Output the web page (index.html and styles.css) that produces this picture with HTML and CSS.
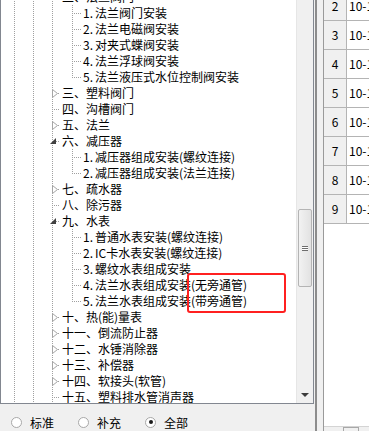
FILE: index.html
```html
<!DOCTYPE html>
<html>
<head>
    <title>定额章节</title>
    <link rel="stylesheet" href="styles.css">
</head>
<body>
    <div class="window">
        <div class="left-pane">
            <div class="tree-box">
                <div class="tree">
                    <div class="tree-rows">
                        <div class="row"><i class="g"></i><i class="g"></i><i class="c1"><svg class="open" width="6" height="6" viewBox="0 0 6 6"><path d="M6 0 L6 6 L0 6 Z" fill="#404040"/></svg></i><span>二、法兰阀门</span></div>
                        <div class="row"><i class="g"></i><i class="g"></i><i class="g"></i><i class="c2"></i><span><b class="n">1.</b>法兰阀门安装</span></div>
                        <div class="row"><i class="g"></i><i class="g"></i><i class="g"></i><i class="c2"></i><span><b class="n">2.</b>法兰电磁阀安装</span></div>
                        <div class="row"><i class="g"></i><i class="g"></i><i class="g"></i><i class="c2"></i><span><b class="n">3.</b>对夹式蝶阀安装</span></div>
                        <div class="row"><i class="g"></i><i class="g"></i><i class="g"></i><i class="c2"></i><span><b class="n">4.</b>法兰浮球阀安装</span></div>
                        <div class="row"><i class="g"></i><i class="g"></i><i class="g"></i><i class="c2 last"></i><span><b class="n">5.</b>法兰液压式水位控制阀安装</span></div>
                        <div class="row"><i class="g"></i><i class="g"></i><i class="c1"><svg class="closed" width="6" height="9" viewBox="0 0 6 9"><path d="M0.5 0.5 L5.5 4.5 L0.5 8.5 Z" fill="#fff" stroke="#a6a6a6"/></svg></i><span>三、塑料阀门</span></div>
                        <div class="row"><i class="g"></i><i class="g"></i><i class="c1"></i><span>四、沟槽阀门</span></div>
                        <div class="row"><i class="g"></i><i class="g"></i><i class="c1"><svg class="closed" width="6" height="9" viewBox="0 0 6 9"><path d="M0.5 0.5 L5.5 4.5 L0.5 8.5 Z" fill="#fff" stroke="#a6a6a6"/></svg></i><span>五、法兰</span></div>
                        <div class="row"><i class="g"></i><i class="g"></i><i class="c1"><svg class="open" width="6" height="6" viewBox="0 0 6 6"><path d="M6 0 L6 6 L0 6 Z" fill="#404040"/></svg></i><span>六、减压器</span></div>
                        <div class="row"><i class="g"></i><i class="g"></i><i class="g"></i><i class="c2"></i><span><b class="n">1.</b>减压器组成安装(螺纹连接)</span></div>
                        <div class="row"><i class="g"></i><i class="g"></i><i class="g"></i><i class="c2 last"></i><span><b class="n">2.</b>减压器组成安装(法兰连接)</span></div>
                        <div class="row"><i class="g"></i><i class="g"></i><i class="c1"><svg class="closed" width="6" height="9" viewBox="0 0 6 9"><path d="M0.5 0.5 L5.5 4.5 L0.5 8.5 Z" fill="#fff" stroke="#a6a6a6"/></svg></i><span>七、疏水器</span></div>
                        <div class="row"><i class="g"></i><i class="g"></i><i class="c1"></i><span>八、除污器</span></div>
                        <div class="row"><i class="g"></i><i class="g"></i><i class="c1"><svg class="open" width="6" height="6" viewBox="0 0 6 6"><path d="M6 0 L6 6 L0 6 Z" fill="#404040"/></svg></i><span>九、水表</span></div>
                        <div class="row"><i class="g"></i><i class="g"></i><i class="g"></i><i class="c2"></i><span><b class="n">1.</b>普通水表安装(螺纹连接)</span></div>
                        <div class="row"><i class="g"></i><i class="g"></i><i class="g"></i><i class="c2"></i><span><b class="n">2.</b>IC卡水表安装(螺纹连接)</span></div>
                        <div class="row"><i class="g"></i><i class="g"></i><i class="g"></i><i class="c2"></i><span><b class="n">3.</b>螺纹水表组成安装</span></div>
                        <div class="row"><i class="g"></i><i class="g"></i><i class="g"></i><i class="c2"></i><span><b class="n">4.</b>法兰水表组成安装(无旁通管)</span></div>
                        <div class="row"><i class="g"></i><i class="g"></i><i class="g"></i><i class="c2 last"></i><span><b class="n">5.</b>法兰水表组成安装(带旁通管)</span></div>
                        <div class="row"><i class="g"></i><i class="g"></i><i class="c1"><svg class="closed" width="6" height="9" viewBox="0 0 6 9"><path d="M0.5 0.5 L5.5 4.5 L0.5 8.5 Z" fill="#fff" stroke="#a6a6a6"/></svg></i><span>十、热(能)量表</span></div>
                        <div class="row"><i class="g"></i><i class="g"></i><i class="c1"><svg class="closed" width="6" height="9" viewBox="0 0 6 9"><path d="M0.5 0.5 L5.5 4.5 L0.5 8.5 Z" fill="#fff" stroke="#a6a6a6"/></svg></i><span>十一、倒流防止器</span></div>
                        <div class="row"><i class="g"></i><i class="g"></i><i class="c1"><svg class="closed" width="6" height="9" viewBox="0 0 6 9"><path d="M0.5 0.5 L5.5 4.5 L0.5 8.5 Z" fill="#fff" stroke="#a6a6a6"/></svg></i><span>十二、水锤消除器</span></div>
                        <div class="row"><i class="g"></i><i class="g"></i><i class="c1"><svg class="closed" width="6" height="9" viewBox="0 0 6 9"><path d="M0.5 0.5 L5.5 4.5 L0.5 8.5 Z" fill="#fff" stroke="#a6a6a6"/></svg></i><span>十三、补偿器</span></div>
                        <div class="row"><i class="g"></i><i class="g"></i><i class="c1"><svg class="closed" width="6" height="9" viewBox="0 0 6 9"><path d="M0.5 0.5 L5.5 4.5 L0.5 8.5 Z" fill="#fff" stroke="#a6a6a6"/></svg></i><span>十四、软接头(软管)</span></div>
                        <div class="row"><i class="g"></i><i class="g"></i><i class="c1"></i><span>十五、塑料排水管消声器</span></div>
                        <div class="row"><i class="g"></i><i class="g"></i><i class="g"></i></div>
                    </div>
                </div>
                <div class="vscroll">
                    <div class="track-top"></div>
                    <div class="thumb"><span class="grip"></span></div>
                    <div class="track-bottom"></div>
                    <div class="arrow-down"><span class="tri"></span></div>
                </div>
                <div class="mark"></div>
            </div>
            <div class="options">
                <label class="radio"><span class="circle"></span>标准</label>
                <label class="radio"><span class="circle"></span>补充</label>
                <label class="radio"><span class="circle checked"></span>全部</label>
            </div>
        </div>
        <div class="splitter"><span class="bar"></span></div>
        <div class="grid">
            <div class="grid-rows">
                <div class="grid-row"><span class="num">2</span><span class="code">10-132</span></div>
                <div class="grid-row"><span class="num">3</span><span class="code">10-133</span></div>
                <div class="grid-row"><span class="num">4</span><span class="code">10-134</span></div>
                <div class="grid-row"><span class="num">5</span><span class="code">10-135</span></div>
                <div class="grid-row"><span class="num">6</span><span class="code">10-136</span></div>
                <div class="grid-row"><span class="num">7</span><span class="code">10-137</span></div>
                <div class="grid-row"><span class="num">8</span><span class="code">10-138</span></div>
                <div class="grid-row"><span class="num">9</span><span class="code">10-139</span></div>
            </div>
            <div class="hscroll"><span class="hbox"></span></div>
        </div>
    </div>
</body>
</html>
```

FILE: styles.css
```css
body {
    margin: 0;
    font-family: "Noto Sans CJK SC", sans-serif;
    font-size: 12px;
    color: #000;
    background-color: #f0f0f0;
}
.window {
    display: flex;
    height: 431px;
    overflow: hidden;
}
.left-pane {
    width: 314px;
    flex-shrink: 0;
    display: flex;
    flex-direction: column;
}
.tree-box {
    position: relative;
    height: 403px;
    display: flex;
    background-color: #fff;
    border-left: 1px solid #828790;
    border-right: 1px solid #828790;
    border-bottom: 1px solid #828790;
}
.tree {
    flex: 1;
    overflow: hidden;
    padding-left: 1px;
}
.tree-rows {
    margin-top: -11px;
}
.row {
    display: flex;
    align-items: center;
    height: 16px;
    white-space: nowrap;
    line-height: 16px;
}
.row i {
    display: flex;
    align-items: center;
    flex-shrink: 0;
    height: 16px;
    background-repeat: no-repeat;
}
/* vertical guide of an ancestor level */
.row .g {
    width: 19px;
    background-image: repeating-linear-gradient(#a0a0a0 0 1px, transparent 1px 2px);
    background-size: 1px 16px;
    background-position: 12px 0;
}
/* connectors: vertical line + short horizontal */
.row .c1,
.row .c2 {
    background-image:
        repeating-linear-gradient(#a0a0a0 0 1px, transparent 1px 2px),
        repeating-linear-gradient(90deg, #a0a0a0 0 1px, transparent 1px 2px);
}
.row .c1 {
    width: 22px;
    background-size: 1px 16px, 8px 1px;
    background-position: 12px 0, 12px 8px;
}
.row .c2 {
    width: 24px;
    background-size: 1px 16px, 10px 1px;
    background-position: 13px 0, 13px 8px;
}
.row .c2.last {
    background-size: 1px 9px, 10px 1px;
}
.row svg {
    display: block;
}
.row svg.closed {
    margin-left: 12px;
}
.row svg.open {
    margin-left: 10px;
}
.n {
    display: inline-block;
    width: 12px;
    font-weight: normal;
}
.vscroll {
    width: 16px;
    display: flex;
    flex-direction: column;
    background-color: #f0f0f0;
    border-left: 1px solid #e6e6e6;
}
.track-top {
    height: 209px;
}
.thumb {
    height: 76px;
    margin: 0 1px;
    border: 1px solid #b4b4b4;
    border-radius: 2px;
    background: linear-gradient(90deg, #f2f2f2, #e2e2e2);
    display: flex;
    align-items: center;
    justify-content: center;
}
.grip {
    width: 6px;
    height: 5px;
    background-image: repeating-linear-gradient(#6e6e6e 0 1px, #fff 1px 2px);
}
.track-bottom {
    flex: 1;
}
.arrow-down {
    height: 17px;
    display: flex;
    align-items: center;
    justify-content: center;
}
.tri {
    width: 0;
    height: 0;
    border-left: 4px solid transparent;
    border-right: 4px solid transparent;
    border-top: 4px solid #3c3c3c;
}
.mark {
    position: absolute;
    left: 186px;
    top: 273px;
    width: 95px;
    height: 36px;
    border: 2px solid #ff2020;
    border-radius: 3px;
}
.options {
    flex: 1;
    display: flex;
    align-items: center;
    padding-left: 11px;
    padding-top: 9px;
}
.radio {
    display: flex;
    align-items: center;
    margin-right: 24px;
}
.circle {
    width: 9px;
    height: 9px;
    border: 1px solid #a8a8a8;
    border-radius: 50%;
    background-color: #fff;
    margin-right: 8px;
    display: flex;
    align-items: center;
    justify-content: center;
}
.circle.checked::after {
    content: "";
    width: 4px;
    height: 4px;
    border-radius: 50%;
    background-color: #1a1a1a;
}
.splitter {
    width: 8px;
    flex-shrink: 0;
    display: flex;
    padding-left: 1px;
}
.bar {
    width: 2px;
    background-color: #8c8c8c;
}
.grid {
    flex: 1;
    min-width: 0;
    display: flex;
    flex-direction: column;
    background-color: #fff;
    border-left: 1px solid #9a9a9a;
}
.grid-rows {
    margin-top: -8px;
}
.grid-row {
    display: flex;
    height: 28px;
    border-bottom: 1px solid #b4b4b4;
    line-height: 28px;
    white-space: nowrap;
}
.num {
    width: 22px;
    flex-shrink: 0;
    text-align: center;
    background-color: #f0f0f0;
    border-right: 1px solid #b4b4b4;
}
.code {
    padding-left: 2px;
}
.hscroll {
    margin-top: auto;
    height: 4px;
    background-color: #f0f0f0;
    border-top: 1px solid #d4d4d4;
    padding-left: 19px;
}
.hbox {
    display: block;
    width: 14px;
    height: 4px;
    border: 1px solid #a8a8a8;
    border-bottom: none;
}
```
